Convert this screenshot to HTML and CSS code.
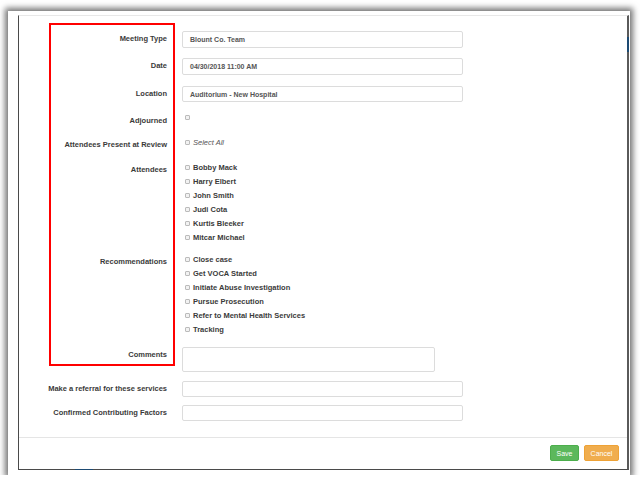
FILE: index.html
```html
<!DOCTYPE html>
<html>
<head>
<meta charset="utf-8">
<link rel="stylesheet" href="styles.css">
</head>
<body>
<div class="frame">
  <div class="screen">
    <div class="form">
      <div class="row r1">
        <div class="lbl">Meeting Type</div>
        <div class="ctl"><div class="input">Blount Co. Team</div></div>
      </div>
      <div class="row r2">
        <div class="lbl">Date</div>
        <div class="ctl"><div class="input">04/30/2018 11:00 AM</div></div>
      </div>
      <div class="row r3">
        <div class="lbl">Location</div>
        <div class="ctl"><div class="input">Auditorium - New Hospital</div></div>
      </div>
      <div class="row r4">
        <div class="lbl">Adjourned</div>
        <div class="ctl"><span class="cb"></span></div>
      </div>
      <div class="row r5">
        <div class="lbl">Attendees Present at Review</div>
        <div class="ctl"><div class="item sel"><span class="cb"></span>Select All</div></div>
      </div>
      <div class="row r6">
        <div class="lbl">Attendees</div>
        <div class="ctl">
          <div class="item"><span class="cb"></span>Bobby Mack</div>
          <div class="item"><span class="cb"></span>Harry Elbert</div>
          <div class="item"><span class="cb"></span>John Smith</div>
          <div class="item"><span class="cb"></span>Judi Cota</div>
          <div class="item"><span class="cb"></span>Kurtis Bleeker</div>
          <div class="item"><span class="cb"></span>Mitcar Michael</div>
        </div>
      </div>
      <div class="row r7">
        <div class="lbl">Recommendations</div>
        <div class="ctl">
          <div class="item"><span class="cb"></span>Close case</div>
          <div class="item"><span class="cb"></span>Get VOCA Started</div>
          <div class="item"><span class="cb"></span>Initiate Abuse Investigation</div>
          <div class="item"><span class="cb"></span>Pursue Prosecution</div>
          <div class="item"><span class="cb"></span>Refer to Mental Health Services</div>
          <div class="item"><span class="cb"></span>Tracking</div>
        </div>
      </div>
      <div class="row r8">
        <div class="lbl">Comments</div>
        <div class="ctl"><div class="textarea"></div></div>
      </div>
      <div class="row r9">
        <div class="lbl">Make a referral for these services</div>
        <div class="ctl"><div class="input"></div></div>
      </div>
      <div class="row r10">
        <div class="lbl">Confirmed Contributing Factors</div>
        <div class="ctl"><div class="input"></div></div>
      </div>
    </div>
    <div class="footer">
      <button class="btn save">Save</button>
      <button class="btn cancel">Cancel</button>
    </div>
    <div class="annot"></div>
    <span class="edge e1"></span>
    <span class="edge e2"></span>
  </div>
</div>
</body>
</html>
```
FILE: styles.css
```css
* { box-sizing: border-box; }
html, body { margin: 0; background: #fff; }
body { font-family: "Liberation Sans", Arial, sans-serif; }

.frame {
  margin: 11px 0 0 8px;
  width: 622px;
  height: 464px;
  background: #fff;
  box-shadow: 0 0 6px 3px rgba(0, 0, 0, 0.55);
  padding: 4px 1px 0 10px;
}

.screen {
  position: relative;
  height: 455px;
  border-top: 1px solid #e8e8e8;
  border-left: 1px solid #4a4a4a;
  border-right: 2px solid #5a5a5a;
  border-bottom: 1px solid #4a4a4a;
  display: flex;
  flex-direction: column;
}

.form { display: flex; flex-direction: column; padding-top: 15px; }

.row { display: flex; align-items: flex-start; gap: 15px; }

.lbl {
  width: 148px;
  flex: none;
  text-align: right;
  font-weight: bold;
  font-size: 7.5px;
  color: #3a3a3a;
  line-height: 10px;
  white-space: nowrap;
}

.ctl { display: flex; flex-direction: column; }

.input {
  width: 281px;
  height: 16.7px;
  border: 1px solid #dcdcdc;
  border-radius: 2px;
  padding-left: 7px;
  font-size: 7px;
  font-weight: bold;
  color: #555;
  display: flex;
  align-items: center;
  white-space: nowrap;
}

.textarea {
  width: 253px;
  height: 25.3px;
  border: 1px solid #dcdcdc;
  border-radius: 2px;
}

.cb {
  width: 5px;
  height: 5px;
  border: 1px solid #bbb;
  background: #f2f2f2;
  border-radius: 1px;
  flex: none;
  margin-left: 3px;
  margin-right: 3px;
}

.item {
  display: flex;
  align-items: center;
  height: 14px;
  font-size: 7.5px;
  font-weight: bold;
  color: #3a3a3a;
  white-space: nowrap;
}
.item.sel { font-weight: normal; font-style: italic; color: #555; height: 10px; }

.r1 .lbl { line-height: 16.7px; }
.r2 { margin-top: 10.6px; }
.r2 .lbl { line-height: 16.7px; }
.r3 { margin-top: 10.7px; }
.r3 .lbl { line-height: 16.7px; }
.r4 { margin-top: 12.7px; }
.r4 .lbl { padding-top: 1px; }
.r5 { margin-top: 11.7px; }
.r5 .lbl { padding-top: 2.6px; }
.r6 { margin-top: 10px; }
.r6 .lbl { line-height: 14px; padding-top: 3px; }
.r7 { margin-top: 8.4px; }
.r7 .lbl { line-height: 14px; padding-top: 2.6px; }
.r8 { margin-top: 10px; }
.r8 .lbl { padding-top: 3px; }
.r9 { margin-top: 8.7px; }
.r9 .input { height: 16px; }
.r9 .lbl { line-height: 16px; }
.r10 { margin-top: 8.6px; }
.r10 .input { height: 15.7px; }
.r10 .lbl { line-height: 15.7px; }

.footer {
  margin-top: 16px;
  border-top: 1px solid #e5e5e5;
  padding: 7px 8px 0 0;
  display: flex;
  justify-content: flex-end;
  gap: 5px;
}

.btn {
  height: 16px;
  padding: 0;
  border: 1px solid;
  border-radius: 2px;
  font-family: inherit;
  font-size: 7px;
  color: #fff;
}
.save { width: 29px; background: #5cb85c; border-color: #4cae4c; }
.cancel { width: 35px; background: #f0ad4e; border-color: #eea236; }

.annot {
  position: absolute;
  left: 30px;
  top: 7px;
  width: 126px;
  height: 343px;
  border: 2px solid #f00;
}

.edge { position: absolute; background: #1d4a72; }
.e1 { right: -2px; top: 21px; width: 2px; height: 15px; }
.e2 { bottom: -1px; left: 56px; width: 18px; height: 1px; }
```
